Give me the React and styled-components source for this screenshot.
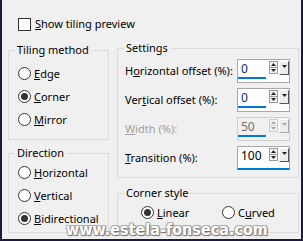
import React from 'react';
import styled, { createGlobalStyle } from 'styled-components';

const Global = createGlobalStyle`
  html, body { margin: 0; padding: 0; background: #f0f0f0; }
  body {
    font-family: "Noto Sans", "Open Sans", sans-serif;
    font-size: 11px;
    color: #000;
  }
`;

const Window = styled.div`
  position: relative;
  box-sizing: border-box;
  width: 303px;
  height: 241px;
  background: #f0f0f0;
  border-left: 2px solid #1d1a3b;
  border-right: 2px solid #1d1a3b;
  border-bottom: 2px solid #1d1a3b;
  padding: 17px 2px 0 6px;
  overflow: hidden;
`;

const CheckRow = styled.label`
  display: flex;
  align-items: center;
  gap: 4px;
  height: 14px;
  margin-left: 10px;
  line-height: 14px;
`;

const CheckBox = styled.span`
  box-sizing: border-box;
  width: 13px;
  height: 13px;
  border: 1px solid #333;
  background: #fff;
`;

const Columns = styled.div`
  display: grid;
  grid-template-columns: 101px 182px;
  column-gap: 8px;
  margin-top: 9px;
`;

const Column = styled.div`
  display: flex;
  flex-direction: column;
  gap: ${p => p.$gap}px;
  padding-top: ${p => p.$top || 0}px;
`;

const Group = styled.fieldset`
  box-sizing: border-box;
  margin: 0;
  min-width: 0;
  height: ${p => p.$h}px;
  border: 1px solid #dcdcdc;
  padding: 0;
`;

const Legend = styled.legend`
  margin-left: 6px;
  padding: 0 2px;
  line-height: 16px;
`;

const RadioList = styled.div`
  display: flex;
  flex-direction: column;
  padding: ${p => p.$top || 0}px 0 0 9px;
`;

const RadioRow = styled.label`
  display: flex;
  align-items: center;
  gap: 3px;
  height: 23px;
`;

const RadioCircle = styled.span`
  box-sizing: border-box;
  width: 13px;
  height: 13px;
  border: 1px solid #333;
  border-radius: 50%;
  background: #fff;
  display: flex;
  align-items: center;
  justify-content: center;
  &::after {
    content: '';
    display: ${p => (p.$checked ? 'block' : 'none')};
    width: 7px;
    height: 7px;
    border-radius: 50%;
    background: #333;
  }
`;

const SettingsGrid = styled.div`
  display: grid;
  grid-template-columns: 1fr 53px;
  grid-auto-rows: 29px;
  align-items: center;
  padding: 0 8px 0 7px;
`;

const FieldLabel = styled.span`
  color: ${p => (p.$disabled ? '#a0a0a0' : '#000')};
`;

const Spin = styled.div`
  box-sizing: border-box;
  display: flex;
  align-items: flex-start;
  width: 53px;
  height: 24px;
  padding: 1px 0 0 0;
  border: 1px solid ${p => (p.$disabled ? '#cfcfcf' : '#a8a8a8')};
  border-bottom: ${p => (p.$focused ? '2px solid #0078d7' : `1px solid ${p.$disabled ? '#cfcfcf' : '#a8a8a8'}`)};
  background: ${p => (p.$disabled ? '#f0f0f0' : '#fff')};
`;

const Value = styled.div`
  box-sizing: border-box;
  width: 28px;
  height: 18px;
  padding-left: 3px;
  font-size: 12px;
  line-height: 16px;
  color: ${p => (p.$disabled ? '#6d6d6d' : p.$blue ? '#0a2f7a' : '#000')};
  border-bottom: 2px solid ${p => (p.$focused ? 'transparent' : '#0078d7')};
`;

const UpDown = styled.div`
  display: flex;
  flex-direction: column;
  margin-left: 3px;
  width: 9px;
`;

const StepBtn = styled.div`
  box-sizing: border-box;
  width: 9px;
  height: 7px;
  border: 1px solid ${p => (p.$disabled ? '#cfcfcf' : '#9a9a9a')};
  background: #f4f4f4;
  display: flex;
  align-items: center;
  justify-content: center;
  & + & { border-top: none; height: 6px; }
`;

const DropBtn = styled.div`
  box-sizing: border-box;
  width: 10px;
  height: 14px;
  margin-left: 1px;
  border-top: 1px solid #fff;
  border-left: 1px solid #fff;
  border-right: 1px solid ${p => (p.$disabled ? '#a8a8a8' : '#555')};
  border-bottom: 1px solid ${p => (p.$disabled ? '#a8a8a8' : '#555')};
  background: #ececec;
  display: flex;
  align-items: flex-start;
  justify-content: center;
  padding-top: 3px;
`;

const StyleRow = styled.div`
  display: grid;
  grid-template-columns: 81px auto;
  padding-left: 23px;
`;

const Watermark = styled.div`
  position: absolute;
  left: 64px;
  top: 221px;
  font-family: "DejaVu Sans Condensed", "DejaVu Sans", sans-serif;
  font-weight: bold;
  font-size: 16px;
  line-height: 18px;
  color: #fff;
  white-space: nowrap;
  text-shadow: 1px 1px 1px #6f6f6f, -1px -1px 0 #b0b0b0, 1px -1px 0 #a8a8a8, -1px 1px 0 #a8a8a8;
  pointer-events: none;
`;

const Tri = ({ up, color }) => (
  <svg width="5" height="3" viewBox="0 0 5 3" style={{ display: 'block' }}>
    <polygon points={up ? '2.5,0 5,3 0,3' : '0,0 5,0 2.5,3'} fill={color} />
  </svg>
);

const Radio = ({ checked, children }) => (
  <RadioRow>
    <RadioCircle $checked={checked} />
    <span>{children}</span>
  </RadioRow>
);

const SpinBox = ({ value, disabled, focused, blue }) => {
  const c = disabled ? '#a8a8a8' : '#222';
  return (
    <Spin $disabled={disabled} $focused={focused}>
      <Value $disabled={disabled} $focused={focused} $blue={blue}>{value}</Value>
      <UpDown>
        <StepBtn $disabled={disabled}><Tri up color={c} /></StepBtn>
        <StepBtn $disabled={disabled}><Tri color={c} /></StepBtn>
      </UpDown>
      <DropBtn $disabled={disabled}><Tri color={c} /></DropBtn>
    </Spin>
  );
};

export default function App() {
  return (
    <>
      <Global />
      <Window>
        <CheckRow>
          <CheckBox />
          <span><u>S</u>how tiling preview</span>
        </CheckRow>
        <Columns>
          <Column $gap={5} $top={2}>
            <Group $h={98}>
              <Legend>Tiling method</Legend>
              <RadioList $top={4}>
                <Radio><u>E</u>dge</Radio>
                <Radio checked><u>C</u>orner</Radio>
                <Radio><u>M</u>irror</Radio>
              </RadioList>
            </Group>
            <Group $h={88}>
              <Legend>Direction</Legend>
              <RadioList>
                <Radio><u>H</u>orizontal</Radio>
                <Radio><u>V</u>ertical</Radio>
                <Radio checked><u>B</u>idirectional</Radio>
              </RadioList>
            </Group>
          </Column>
          <Column $gap={7}>
            <Group $h={138}>
              <Legend>Settings</Legend>
              <SettingsGrid>
                <FieldLabel>H<u>o</u>rizontal offset (%):</FieldLabel>
                <SpinBox value="0" blue />
                <FieldLabel>Ver<u>t</u>ical offset (%):</FieldLabel>
                <SpinBox value="0" blue />
                <FieldLabel $disabled><u>W</u>idth (%):</FieldLabel>
                <SpinBox value="50" disabled />
                <FieldLabel><u>T</u>ransition (%):</FieldLabel>
                <SpinBox value="100" focused />
              </SettingsGrid>
            </Group>
            <Group $h={48}>
              <Legend>Corner style</Legend>
              <StyleRow>
                <Radio checked><u>L</u>inear</Radio>
                <Radio>C<u>u</u>rved</Radio>
              </StyleRow>
            </Group>
          </Column>
        </Columns>
        <Watermark>www.estela-fonseca.com</Watermark>
      </Window>
    </>
  );
}
